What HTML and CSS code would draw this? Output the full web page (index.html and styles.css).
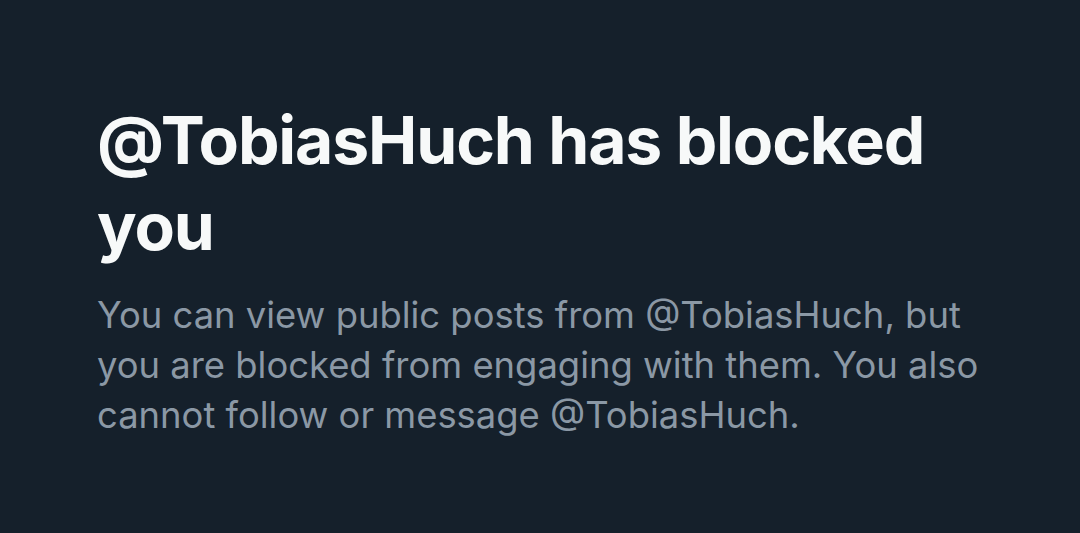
FILE: index.html
```html
<!DOCTYPE html>
<html lang="en">
<head>
<meta charset="utf-8">
<title>Blocked</title>
<link rel="stylesheet" href="styles.css">
</head>
<body>
<main class="empty-state">
  <h1 class="title">@TobiasHuch has blocked you</h1>
  <p class="subtitle">You can view public posts from @TobiasHuch, but you are blocked from engaging with them. You also cannot follow or message @TobiasHuch.</p>
</main>
</body>
</html>
```

FILE: styles.css
```css
html, body {
  margin: 0;
  padding: 0;
  background: #15202b;
  height: 100%;
}
.empty-state {
  box-sizing: border-box;
  width: 1080px;
  padding: 97px 78px 0 97px;
  font-family: Inter, "Noto Sans", sans-serif;
}
.title {
  margin: 0;
  font-size: 66px;
  line-height: 86px;
  font-weight: 700;
  color: #f7f9f9;
  letter-spacing: -1.15px;
}
.subtitle {
  margin: 21px 0 0;
  font-size: 36.4px;
  line-height: 50px;
  font-weight: 400;
  color: #8b98a5;
}
```
